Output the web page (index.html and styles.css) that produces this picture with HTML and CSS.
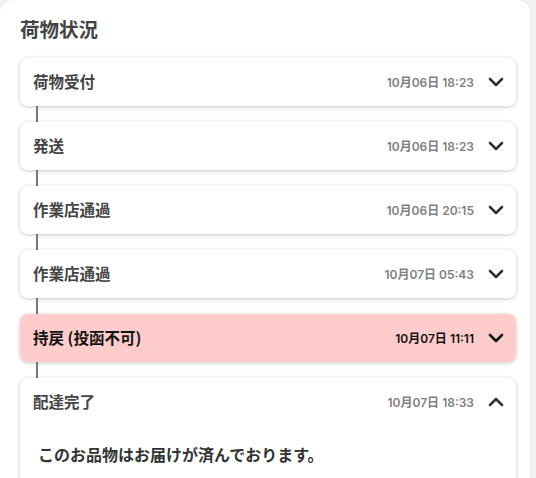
FILE: index.html
```html
<!DOCTYPE html>
<html lang="ja">
<head>
<meta charset="utf-8">
<link rel="stylesheet" href="styles.css">
</head>
<body>
<div class="panel">
  <h1 class="title">荷物状況</h1>
  <div class="timeline">
    <div class="card">
      <span class="label">荷物受付</span>
      <span class="date">10月06日 18:23</span>
      <svg class="chev" viewBox="0 0 16 10"><path d="M2 2 L8 8 L14 2"/></svg>
    </div>
    <div class="link"></div>
    <div class="card">
      <span class="label">発送</span>
      <span class="date">10月06日 18:23</span>
      <svg class="chev" viewBox="0 0 16 10"><path d="M2 2 L8 8 L14 2"/></svg>
    </div>
    <div class="link"></div>
    <div class="card">
      <span class="label">作業店通過</span>
      <span class="date">10月06日 20:15</span>
      <svg class="chev" viewBox="0 0 16 10"><path d="M2 2 L8 8 L14 2"/></svg>
    </div>
    <div class="link"></div>
    <div class="card">
      <span class="label">作業店通過</span>
      <span class="date">10月07日 05:43</span>
      <svg class="chev" viewBox="0 0 16 10"><path d="M2 2 L8 8 L14 2"/></svg>
    </div>
    <div class="link"></div>
    <div class="card alert">
      <span class="label">持戻 (投函不可)</span>
      <span class="date">10月07日 11:11</span>
      <svg class="chev" viewBox="0 0 16 10"><path d="M2 2 L8 8 L14 2"/></svg>
    </div>
    <div class="link"></div>
    <div class="card-open">
      <div class="card-head">
        <span class="label">配達完了</span>
        <span class="date">10月07日 18:33</span>
        <svg class="chev" viewBox="0 0 16 10"><path d="M2 8 L8 2 L14 8"/></svg>
      </div>
      <p class="detail">このお品物はお届けが済んでおります。</p>
    </div>
  </div>
</div>
</body>
</html>
```
FILE: styles.css
```css
html, body {
  margin: 0;
  padding: 0;
}
body {
  background: #f2f2f2;
  font-family: "Noto Sans CJK JP", "Noto Sans", sans-serif;
  height: 478px;
  overflow: hidden;
}
.panel {
  background: #fff;
  width: 530px;
  min-height: 478px;
  border-radius: 12px 12px 0 0;
  box-shadow: 0 0 3px rgba(0,0,0,0.08);
  padding: 15px 14px 0 20px;
  box-sizing: border-box;
}
.title {
  margin: 0 0 15px 0;
  font-size: 19.5px;
  line-height: 28px;
  font-weight: 700;
  color: #444;
}
.timeline {
  width: 496px;
}
.card, .card-head {
  height: 48px;
  display: flex;
  align-items: center;
  padding: 0 12px 2px 13px;
  box-sizing: border-box;
}
.card {
  background: #fff;
  border-radius: 8px;
  box-shadow: 0 1px 4px rgba(0,0,0,0.22);
}
.card-open {
  background: #fff;
  border-radius: 8px 8px 0 0;
  box-shadow: 0 1px 4px rgba(0,0,0,0.22);
  height: 120px;
}
.label {
  flex: 1;
  font-size: 15.5px;
  font-weight: 700;
  color: #444;
}
.date {
  font-family: "Inter", "Noto Sans CJK JP", sans-serif;
  font-size: 12px;
  font-weight: 600;
  color: #808080;
  margin-right: 14px;
}
.chev {
  width: 16px;
  height: 10px;
  margin-top: 2px;
  fill: none;
  stroke: #333;
  stroke-width: 2.6;
  stroke-linecap: round;
  stroke-linejoin: round;
}
.alert {
  background: #ffcccc;
}
.alert .label, .alert .date {
  color: #111;
}
.alert .chev {
  stroke: #111;
}
.link {
  height: 16px;
  margin-left: 16px;
  border-left: 2px solid #777;
}
.detail {
  margin: 0;
  padding: 17px 18px 0 18px;
  font-size: 16px;
  line-height: 22px;
  font-weight: 700;
  color: #333;
}
```
